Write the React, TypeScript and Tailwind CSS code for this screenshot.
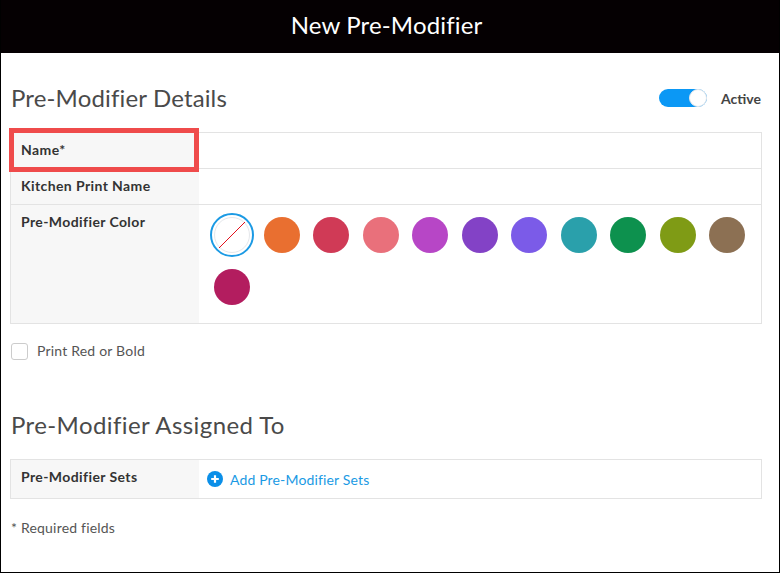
const colors = ['#e96f30', '#d03a56', '#e9707b', '#b746c6', '#8342c6', '#7b5be8', '#2aa0ab', '#0d914e', '#7f9b15', '#8c7053', '#b31d5f']

function Swatches() {
    return (
        <div className="flex-1 flex flex-wrap content-start gap-x-[13.5px] gap-y-4 pl-[15px] pr-2 pt-[12px] pb-[18px]">
            <div className="relative w-9 h-9 rounded-full border border-gray-200 bg-white">
                <div className="absolute -inset-[5px] rounded-full border-2 border-[#1b9ae4]"></div>
                <svg className="absolute -inset-px w-9 h-9" viewBox="0 0 36 36" fill="none">
                    <path d="M5 31L31 5" stroke="#e3101c" strokeWidth="1" />
                </svg>
            </div>
            {colors.map((c) => (
                <div key={c} className="w-9 h-9 rounded-full" style={{ backgroundColor: c }}></div>
            ))}
        </div>
    )
}

function Label({ children }: { children: React.ReactNode }) {
    return (
        <div className="w-[188px] shrink-0 bg-[#f7f7f7] pl-[10px] pt-[7px] text-[14px] leading-[20px] tracking-[0.4px] font-bold text-[#333]">
            {children}
        </div>
    )
}

export default function App() {
    return (
        <div className="w-[780px] h-[573px] bg-white border-x border-b border-black overflow-hidden text-[#444] [font-family:Lato,'Liberation_Sans',sans-serif]">
            <div className="h-[53px] -mx-px pb-1 pr-[7px] bg-[#050002] flex items-center justify-center text-white text-[24px] tracking-[0.15px]">
                New Pre-Modifier
            </div>

            <div className="pl-[9px] pr-[17px]">
                <div className="h-[79px] flex items-center justify-between pt-[11px] pl-px pr-px">
                    <h2 className="text-[24px] tracking-[0.15px] text-[#4a4a4a]">Pre-Modifier Details</h2>
                    <div className="flex items-center gap-[14px]">
                        <div className="w-[48px] h-[18px] rounded-full bg-[#0b98f5] flex justify-end">
                            <div className="w-[18px] h-[18px] rounded-full bg-white border border-gray-200"></div>
                        </div>
                        <span className="text-[14px] font-bold text-[#444]">Active</span>
                    </div>
                </div>

                <div className="relative border border-[#e3e3e3]">
                    <div className="h-[36px] flex border-b border-[#e3e3e3]">
                        <Label>Name*</Label>
                    </div>
                    <div className="h-[36px] flex border-b border-[#e3e3e3]">
                        <Label>Kitchen Print Name</Label>
                    </div>
                    <div className="h-[118px] flex">
                        <Label>Pre-Modifier Color</Label>
                        <Swatches />
                    </div>
                    <div className="absolute -left-[2px] -top-[5px] w-[190px] h-[44px] border-[5px] border-[#ef4b4b]"></div>
                </div>

                <label className="mt-[18px] flex items-center gap-[9px] text-[14px] tracking-[0.2px] text-[#555]">
                    <span className="w-[17px] h-[17px] ml-px rounded-[3px] border border-[#ccc] bg-white"></span>
                    <span className="-mt-[2px]">Print Red or Bold</span>
                </label>

                <h2 className="mt-[48px] ml-px text-[24px] leading-[32px] tracking-[0.4px] text-[#4a4a4a]">Pre-Modifier Assigned To</h2>

                <div className="mt-[18px] h-[40px] flex border border-[#e3e3e3]">
                    <Label>Pre-Modifier Sets</Label>
                    <div className="flex items-center gap-[7px] pl-[8px] text-[14px] tracking-[0.15px] text-[#1b9ae4]">
                        <svg className="w-4 h-4" viewBox="0 0 16 16">
                            <circle cx="8" cy="8" r="8" fill="#0b8fe8" />
                            <path d="M8 4.2v7.6M4.2 8h7.6" stroke="#fff" strokeWidth="2.2" />
                        </svg>
                        Add Pre-Modifier Sets
                    </div>
                </div>

                <p className="mt-[19px] ml-px text-[14px] leading-[20px] tracking-[0.2px] text-[#555]">* Required fields</p>
            </div>
        </div>
    )
}
